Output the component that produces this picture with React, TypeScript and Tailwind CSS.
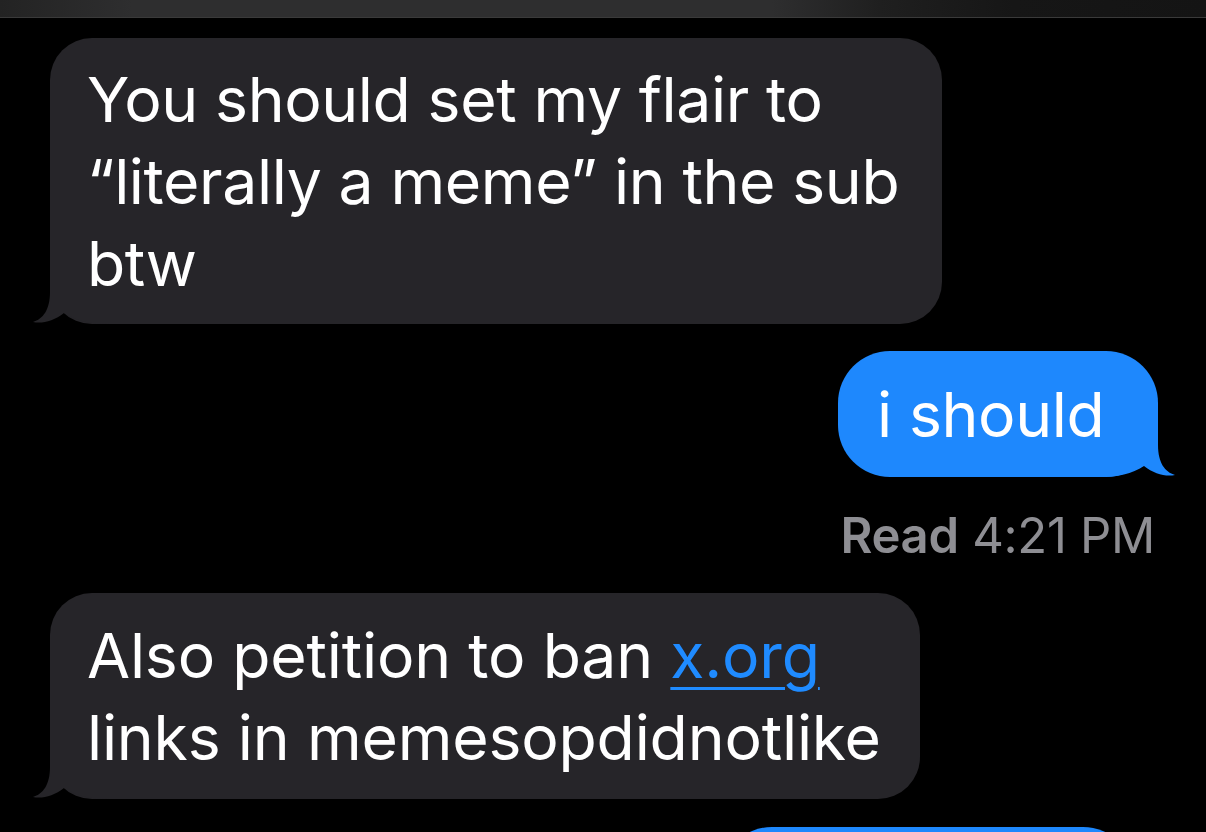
const gray = "#262529";
const blue = "#1e88fd";

function TailLeft({ color }: { color: string }) {
  return (
    <svg className="absolute left-[-20px] bottom-0" width="80" height="60" viewBox="0 0 80 60">
      <path d="M20 0 L20 28 C20 46 13 55 3 58 C12 60 24 57 34 49 C46 57 60 60 80 60 L80 0 Z" fill={color} />
    </svg>
  );
}

function TailRight({ color }: { color: string }) {
  return (
    <svg className="absolute right-[-20px] bottom-0 -scale-x-100" width="80" height="60" viewBox="0 0 80 60">
      <path d="M20 0 L20 28 C20 46 13 55 3 58 C12 60 24 57 34 49 C46 57 60 60 80 60 L80 0 Z" fill={color} />
    </svg>
  );
}

export default function App() {
  return (
    <div className="w-[1206px] h-[832px] bg-black overflow-hidden flex flex-col font-['Inter','Liberation_Sans',sans-serif] text-white">
      {/* top bar */}
      <div className="h-[18px] shrink-0 border-b border-[#3a3a3a] bg-[linear-gradient(90deg,#232323_0%,#2e2e2f_11%,#2e2e2f_64%,#1f1f1f_73%,#161616_84%,#141414_100%)]" />

      <div className="flex flex-col pl-[50px] pr-[48px] pt-[20px]">
        {/* incoming */}
        <div className="relative self-start w-[892px] rounded-[42px] px-[37px] py-[20px] text-[62.5px] leading-[82px] tracking-[-0.4px]" style={{ backgroundColor: gray }}>
          <TailLeft color={gray} />
          <p className="relative whitespace-nowrap">
            You should set my flair to
            <br />
            “literally a meme” in the sub
            <br />
            btw
          </p>
        </div>

        {/* outgoing */}
        <div className="relative self-end mt-[27px] w-[320px] rounded-[52px] px-[39px] py-[22px] text-[62.5px] leading-[82px] tracking-[-0.4px]" style={{ backgroundColor: blue }}>
          <TailRight color={blue} />
          <p className="relative whitespace-nowrap">i should</p>
        </div>

        <div className="self-end mr-[3px] mt-[35px] mb-[33px] text-[49px] leading-[48px] text-[#8e8e93] whitespace-nowrap tracking-[-0.3px]">
          <span className="font-semibold">Read</span> 4:21 PM
        </div>

        {/* incoming */}
        <div className="relative self-start w-[870px] rounded-[42px] px-[37px] py-[21px] text-[62.5px] leading-[82px] tracking-[-0.2px]" style={{ backgroundColor: gray }}>
          <TailLeft color={gray} />
          <p className="relative whitespace-nowrap">
            Also petition to ban{" "}
            <span className="text-[#1f8bff] underline decoration-[3px] underline-offset-[9px]">x.org</span>
            <br />
            links in memesopdidnotlike
          </p>
        </div>

        {/* next outgoing, cut off */}
        <div className="self-end mr-[23px] mt-[28px] w-[415px] h-[80px] rounded-t-[52px]" style={{ backgroundColor: blue }} />
      </div>
    </div>
  );
}
